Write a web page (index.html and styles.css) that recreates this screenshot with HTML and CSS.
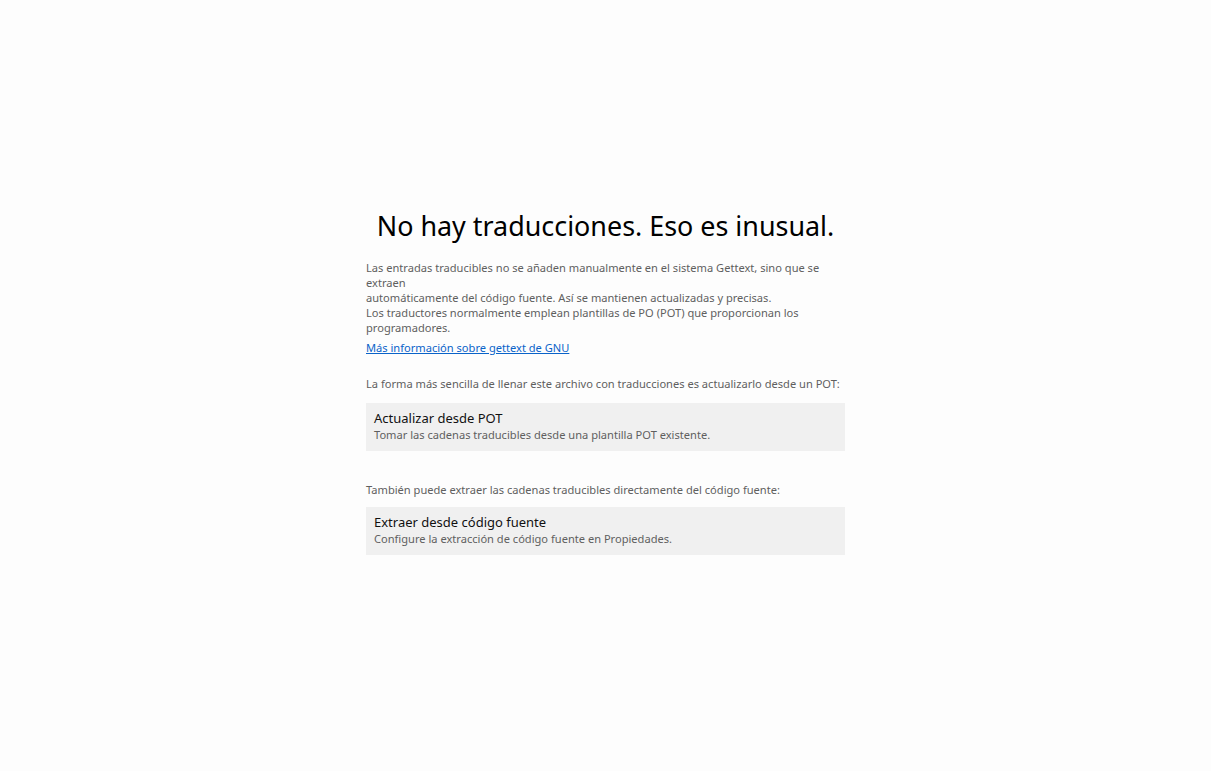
FILE: index.html
```html
<!DOCTYPE html>
<html lang="es">
<head>
<meta charset="utf-8">
<title>Sin traducciones</title>
<link rel="stylesheet" href="styles.css">
</head>
<body>
<main class="page">
  <div class="content">
    <h1 class="title">No hay traducciones. Eso es inusual.</h1>
    <p class="intro">Las entradas traducibles no se añaden manualmente en el sistema Gettext, sino que se<br>extraen<br>automáticamente del código fuente. Así se mantienen actualizadas y precisas.<br>Los traductores normalmente emplean plantillas de PO (POT) que proporcionan los<br>programadores.</p>
    <p class="link-line"><a class="link" href="#">Más información sobre gettext de GNU</a></p>
    <p class="hint hint-first">La forma más sencilla de llenar este archivo con traducciones es actualizarlo desde un POT:</p>
    <div class="action">
      <div class="action-title">Actualizar desde POT</div>
      <div class="action-sub">Tomar las cadenas traducibles desde una plantilla POT existente.</div>
    </div>
    <p class="hint hint-second">También puede extraer las cadenas traducibles directamente del código fuente:</p>
    <div class="action action-second">
      <div class="action-title">Extraer desde código fuente</div>
      <div class="action-sub">Configure la extracción de código fuente en Propiedades.</div>
    </div>
  </div>
</main>
</body>
</html>
```
FILE: styles.css
```css
html, body {
  margin: 0;
  padding: 0;
  background: #fdfdfd;
}
body {
  font-family: "Segoe UI", "Noto Sans", "Open Sans", sans-serif;
  color: #5f5f5f;
  font-size: 11.1px;
  line-height: 15px;
}
.page {
  display: flex;
  justify-content: center;
  padding-top: 208px;
}
.content {
  width: 479px;
  display: flex;
  flex-direction: column;
}
.title {
  margin: 0;
  font-size: 26.9px;
  line-height: 36px;
  font-weight: 400;
  color: #000;
  text-align: center;
  white-space: nowrap;
}
.intro {
  margin: 16px 0 0;
  white-space: nowrap;
}
.link-line {
  margin: 5px 0 0;
}
.link {
  color: #0a63c9;
  text-decoration: underline;
}
.hint {
  margin: 0;
  white-space: nowrap;
}
.hint-first {
  margin-top: 21px;
}
.hint-second {
  margin-top: 31px;
}
.action {
  margin-top: 12px;
  background: #f0f0f0;
  padding: 6px 8px 9px;
}
.action-second {
  margin-top: 10px;
}
.action-title {
  font-size: 13px;
  line-height: 18px;
  color: #111;
}
.action-sub {
  line-height: 15px;
  color: #5f5f5f;
}
```
